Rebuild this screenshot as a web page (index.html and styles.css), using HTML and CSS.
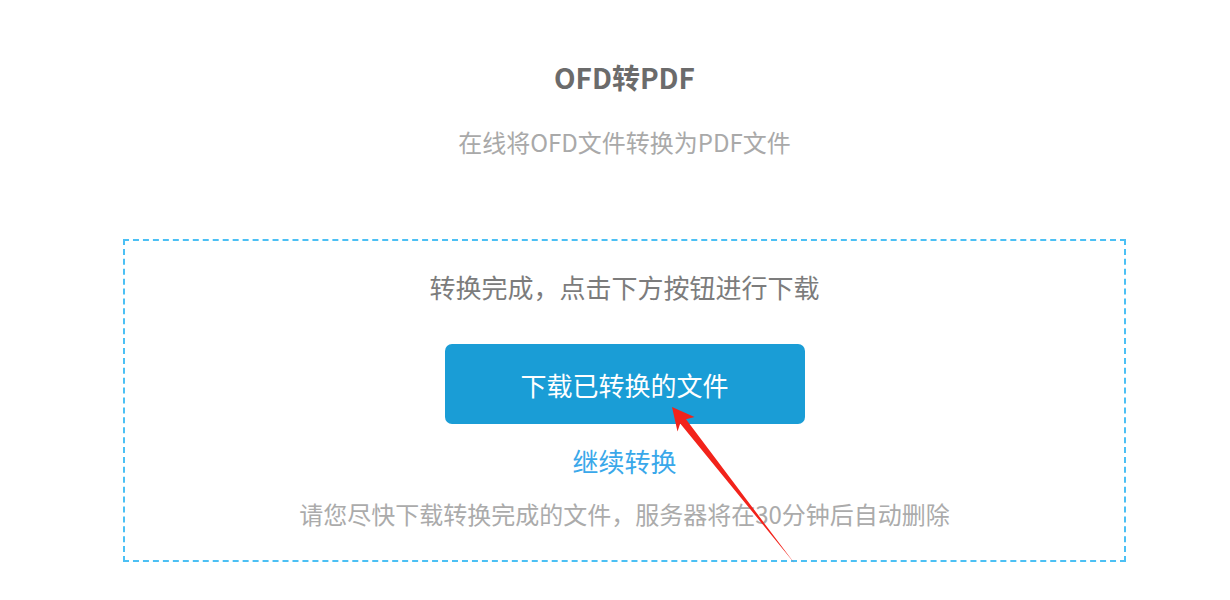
FILE: index.html
```html
<!DOCTYPE html>
<html lang="zh-CN">
<head>
<meta charset="utf-8">
<title>OFD转PDF</title>
<link rel="stylesheet" href="styles.css">
</head>
<body>
<div class="page">
  <div class="header">
    <h1 class="title">OFD转PDF</h1>
    <p class="subtitle">在线将OFD文件转换为PDF文件</p>
  </div>
  <div class="result-box">
    <p class="status">转换完成，点击下方按钮进行下载</p>
    <a class="download-btn" href="#">下载已转换的文件</a>
    <a class="continue-link" href="#">继续转换</a>
    <p class="notice">请您尽快下载转换完成的文件，服务器将在30分钟后自动删除</p>
  </div>
</div>
<svg class="annotation" width="1230" height="600" viewBox="0 0 1230 600">
  <polygon fill="#f2231b" points="672,407 694.5,417 686,419.2 795,564 680.2,423.5 677.5,431.5"/>
</svg>
</body>
</html>
```

FILE: styles.css
```css
html, body {
  margin: 0;
  padding: 0;
  background: #ffffff;
}

body {
  font-family: "Noto Sans CJK SC", "Noto Sans", sans-serif;
  position: relative;
  width: 1230px;
  height: 600px;
  overflow: hidden;
}

.page {
  width: 1003px;
  margin-left: 123px;
  display: flex;
  flex-direction: column;
  align-items: stretch;
}

.header {
  display: flex;
  flex-direction: column;
  align-items: center;
  padding-top: 59px;
}

.title {
  margin: 0;
  font-size: 28px;
  line-height: 36px;
  font-weight: bold;
  color: #6b6b6b;
}

.subtitle {
  margin: 32px 0 0;
  font-size: 24px;
  line-height: 30px;
  color: #a9a9a9;
}

.result-box {
  margin-top: 82px;
  border: 2px dashed #4cc0f4;
  padding: 28px 0 29px;
  display: flex;
  flex-direction: column;
  align-items: center;
}

.status {
  margin: 0;
  font-size: 26px;
  line-height: 36px;
  color: #7c7c7c;
}

.download-btn {
  margin-top: 39px;
  width: 360px;
  height: 80px;
  border-radius: 7px;
  background: #1a9dd6;
  color: #ffffff;
  font-size: 26px;
  display: flex;
  align-items: center;
  justify-content: center;
  text-decoration: none;
}

.continue-link {
  margin-top: 19px;
  font-size: 26px;
  line-height: 36px;
  color: #3aa8ea;
  text-decoration: none;
}

.notice {
  margin: 18px 0 0;
  font-size: 24px;
  line-height: 34px;
  color: #ababab;
}

.annotation {
  position: absolute;
  left: 0;
  top: 0;
  pointer-events: none;
}
```
